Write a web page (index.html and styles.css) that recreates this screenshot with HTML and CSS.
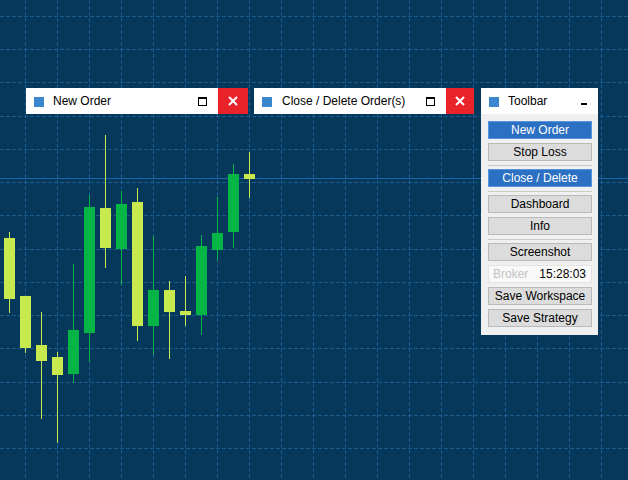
FILE: index.html
```html
<!DOCTYPE html>
<html>
<head>
<meta charset="utf-8">
<link rel="stylesheet" href="styles.css">
</head>
<body>
<div class="desk">
  <svg class="chart" width="628" height="480" viewBox="0 0 628 480" xmlns="http://www.w3.org/2000/svg">
    <g class="grid" stroke="#1a5b8e" stroke-width="1" stroke-dasharray="4 2">
      <line x1="25.5" y1="0" x2="25.5" y2="480"/>
      <line x1="57.5" y1="0" x2="57.5" y2="480"/>
      <line x1="89.5" y1="0" x2="89.5" y2="480"/>
      <line x1="121.5" y1="0" x2="121.5" y2="480"/>
      <line x1="153.5" y1="0" x2="153.5" y2="480"/>
      <line x1="185.5" y1="0" x2="185.5" y2="480"/>
      <line x1="217.5" y1="0" x2="217.5" y2="480"/>
      <line x1="249.5" y1="0" x2="249.5" y2="480"/>
      <line x1="281.5" y1="0" x2="281.5" y2="480"/>
      <line x1="313.5" y1="0" x2="313.5" y2="480"/>
      <line x1="345.5" y1="0" x2="345.5" y2="480"/>
      <line x1="377.5" y1="0" x2="377.5" y2="480"/>
      <line x1="409.5" y1="0" x2="409.5" y2="480"/>
      <line x1="441.5" y1="0" x2="441.5" y2="480"/>
      <line x1="473.5" y1="0" x2="473.5" y2="480"/>
      <line x1="505.5" y1="0" x2="505.5" y2="480"/>
      <line x1="537.5" y1="0" x2="537.5" y2="480"/>
      <line x1="569.5" y1="0" x2="569.5" y2="480"/>
      <line x1="601.5" y1="0" x2="601.5" y2="480"/>
      <line x1="0" y1="16.5" x2="628" y2="16.5"/>
      <line x1="0" y1="49.5" x2="628" y2="49.5"/>
      <line x1="0" y1="82.5" x2="628" y2="82.5"/>
      <line x1="0" y1="116.5" x2="628" y2="116.5"/>
      <line x1="0" y1="149.5" x2="628" y2="149.5"/>
      <line x1="0" y1="182.5" x2="628" y2="182.5"/>
      <line x1="0" y1="215.5" x2="628" y2="215.5"/>
      <line x1="0" y1="249.5" x2="628" y2="249.5"/>
      <line x1="0" y1="282.5" x2="628" y2="282.5"/>
      <line x1="0" y1="315.5" x2="628" y2="315.5"/>
      <line x1="0" y1="348.5" x2="628" y2="348.5"/>
      <line x1="0" y1="382.5" x2="628" y2="382.5"/>
      <line x1="0" y1="415.5" x2="628" y2="415.5"/>
      <line x1="0" y1="448.5" x2="628" y2="448.5"/>
    </g>
    <line x1="0" y1="178.5" x2="628" y2="178.5" stroke="#1766a8" stroke-width="1"/>
    <g class="bull" fill="#c9ea4f">
      <rect x="9" y="232" width="1" height="81"/><rect x="4" y="238" width="11" height="61"/>
      <rect x="25" y="296" width="1" height="57"/><rect x="20" y="296" width="11" height="52"/>
      <rect x="41" y="312" width="1" height="107"/><rect x="36" y="345" width="11" height="16"/>
      <rect x="57" y="352" width="1" height="91"/><rect x="52" y="357" width="11" height="18"/>
      <rect x="105" y="135" width="1" height="133"/><rect x="100" y="208" width="11" height="40"/>
      <rect x="137" y="188" width="1" height="153"/><rect x="132" y="202" width="11" height="124"/>
      <rect x="169" y="281" width="1" height="78"/><rect x="164" y="290" width="11" height="22"/>
      <rect x="185" y="276" width="1" height="50"/><rect x="180" y="311" width="11" height="4"/>
      <rect x="249" y="152" width="1" height="46"/><rect x="244" y="174" width="11" height="5"/>
    </g>
    <g class="bear" fill="#02b544">
      <rect x="73" y="264" width="1" height="119"/><rect x="68" y="330" width="11" height="44"/>
      <rect x="89" y="195" width="1" height="167"/><rect x="84" y="207" width="11" height="126"/>
      <rect x="121" y="191" width="1" height="94"/><rect x="116" y="204" width="11" height="45"/>
      <rect x="153" y="236" width="1" height="119"/><rect x="148" y="290" width="11" height="36"/>
      <rect x="201" y="235" width="1" height="100"/><rect x="196" y="246" width="11" height="69"/>
      <rect x="217" y="197" width="1" height="64"/><rect x="212" y="233" width="11" height="17"/>
      <rect x="233" y="164" width="1" height="84"/><rect x="228" y="174" width="11" height="58"/>
    </g>
  </svg>

  <div class="win win-new">
    <div class="title">
      <span class="ico"></span>
      <span class="ttext">New Order</span>
      <span class="max"></span>
      <span class="close"><svg width="10" height="10" viewBox="0 0 10 10"><path d="M1 1L9 9M9 1L1 9" stroke="#fff" stroke-width="2"/></svg></span>
    </div>
  </div>

  <div class="win win-del">
    <div class="title">
      <span class="ico"></span>
      <span class="ttext">Close / Delete Order(s)</span>
      <span class="max"></span>
      <span class="close close-narrow"><svg width="10" height="10" viewBox="0 0 10 10"><path d="M1 1L9 9M9 1L1 9" stroke="#fff" stroke-width="2"/></svg></span>
    </div>
  </div>

  <div class="win win-tool">
    <div class="title">
      <span class="ico"></span>
      <span class="ttext">Toolbar</span>
      <span class="min"></span>
    </div>
    <div class="tbody">
      <div class="btn blue">New Order</div>
      <div class="btn">Stop Loss</div>
      <div class="sep"></div>
      <div class="btn blue">Close / Delete</div>
      <div class="sep"></div>
      <div class="btn">Dashboard</div>
      <div class="btn">Info</div>
      <div class="sep"></div>
      <div class="btn">Screenshot</div>
      <div class="field"><span class="broker">Broker</span><span class="time">15:28:03</span></div>
      <div class="btn">Save Workspace</div>
      <div class="btn">Save Strategy</div>
    </div>
  </div>
</div>
</body>
</html>
```
FILE: styles.css
```css
html, body {
  margin: 0;
  padding: 0;
}
body {
  font-family: "Liberation Sans", Arial, sans-serif;
  font-size: 12px;
  color: #000;
}
.desk {
  position: relative;
  width: 628px;
  height: 480px;
  overflow: hidden;
  background: #06385b;
}
.chart {
  display: block;
}
.win {
  position: absolute;
  top: 88px;
  background: #fff;
}
.win-new {
  left: 26px;
  width: 222px;
}
.win-del {
  left: 254px;
  width: 220px;
}
.win-tool {
  left: 481px;
  width: 117px;
}
.title {
  display: flex;
  align-items: center;
  height: 26px;
  padding-left: 8px;
  background: #fff;
}
.ico {
  width: 10px;
  height: 10px;
  background: #3a87cd;
  flex: none;
  margin-top: 1px;
}
.ttext {
  margin-left: 9px;
  flex: 1;
  white-space: nowrap;
  line-height: 14px;
}
.win-del .ttext {
  margin-left: 10px;
}
.max {
  width: 9px;
  height: 9px;
  box-sizing: border-box;
  border: 1px solid #000;
  border-top-width: 2px;
  flex: none;
  margin-right: 11px;
}
.close {
  width: 30px;
  height: 26px;
  background: #ea2229;
  display: flex;
  align-items: center;
  justify-content: center;
  flex: none;
}
.close-narrow {
  width: 28px;
}
.min {
  width: 6px;
  height: 2px;
  background: #000;
  margin: 6px 11px 0 0;
  flex: none;
}
.tbody {
  background: #f0f0f0;
  padding: 7px 6px 8px 7px;
  display: flex;
  flex-direction: column;
}
.btn {
  height: 18px;
  box-sizing: border-box;
  border: 1px solid #b9b9b9;
  background: #dcdcdc;
  text-align: center;
  line-height: 16px;
  margin-bottom: 4px;
  white-space: nowrap;
}
.btn.blue {
  background: #2b70c2;
  border-color: #5596dc;
  color: #fff;
}
.btn:last-child {
  margin-bottom: 0;
}
.sep {
  height: 1px;
  background: #c9c9c9;
  margin-bottom: 3px;
}
.field {
  height: 18px;
  box-sizing: border-box;
  border: 1px solid #e3e3e3;
  background: #f9f9f9;
  display: flex;
  justify-content: space-between;
  align-items: center;
  padding: 0 5px 0 4px;
  margin-bottom: 4px;
  line-height: 16px;
}
.broker {
  color: #c3c3c3;
}
.time {
  color: #000;
}
```
